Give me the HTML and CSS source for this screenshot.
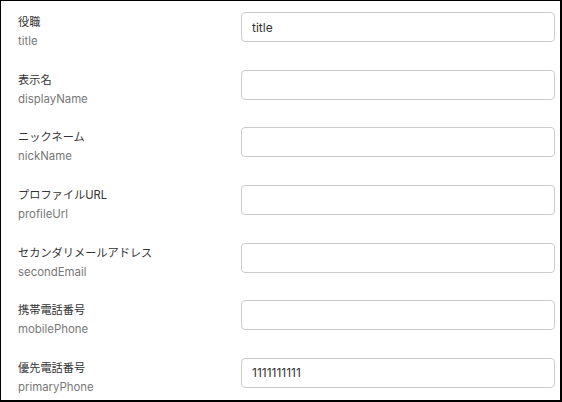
FILE: index.html
```html
<!DOCTYPE html>
<html lang="ja">
<head>
  <meta charset="UTF-8">
  <title>Profile Fields</title>
  <link rel="stylesheet" href="styles.css">
</head>
<body>
  <div class="panel">
    <div class="row">
      <div class="label">
        <div class="name">役職</div>
        <div class="key">title</div>
      </div>
      <input class="field" type="text" value="title">
    </div>
    <div class="row">
      <div class="label">
        <div class="name">表示名</div>
        <div class="key">displayName</div>
      </div>
      <input class="field" type="text">
    </div>
    <div class="row">
      <div class="label">
        <div class="name">ニックネーム</div>
        <div class="key">nickName</div>
      </div>
      <input class="field" type="text">
    </div>
    <div class="row">
      <div class="label">
        <div class="name">プロファイルURL</div>
        <div class="key">profileUrl</div>
      </div>
      <input class="field" type="text">
    </div>
    <div class="row">
      <div class="label">
        <div class="name">セカンダリメールアドレス</div>
        <div class="key">secondEmail</div>
      </div>
      <input class="field" type="text">
    </div>
    <div class="row">
      <div class="label">
        <div class="name">携帯電話番号</div>
        <div class="key">mobilePhone</div>
      </div>
      <input class="field" type="text">
    </div>
    <div class="row">
      <div class="label">
        <div class="name">優先電話番号</div>
        <div class="key">primaryPhone</div>
      </div>
      <input class="field" type="text" value="1111111111">
    </div>
  </div>
</body>
</html>
```

FILE: styles.css
```css
body {
  margin: 0;
  font-family: Inter, "Noto Sans CJK JP", sans-serif;
  background: #fff;
}

.panel {
  width: 559px;
  height: 399px;
  border-style: solid;
  border-color: #000;
  border-width: 1px 2px 2px 1px;
  overflow: hidden;
}

.row {
  display: flex;
  align-items: flex-start;
  height: 57.67px;
  box-sizing: border-box;
  padding: 10px 5px 0 17px;
}

.label {
  flex: 1;
}

.name {
  font-size: 11.2px;
  line-height: 20px;
  color: #333;
  margin-top: 1px;
}

.key {
  font-size: 11.4px;
  line-height: 16px;
  color: #777;
  margin-top: 1px;
}

.field {
  width: 314px;
  height: 30px;
  box-sizing: border-box;
  margin-top: 1px;
  padding: 0 10px;
  border: 1px solid #ccc;
  border-radius: 4px;
  font-family: Inter, sans-serif;
  font-size: 12px;
  color: #333;
  outline: none;
}
```
